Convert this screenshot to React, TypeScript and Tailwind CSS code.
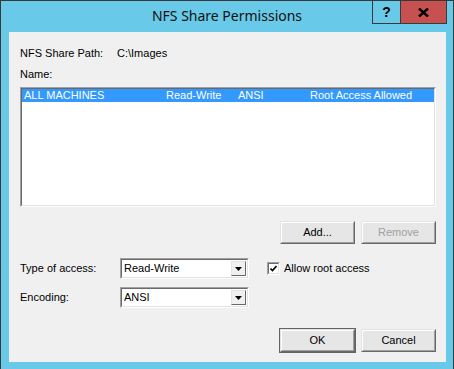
import React from 'react';

const font = { fontFamily: '"Liberation Sans", Arial, sans-serif' };

const WinButton: React.FC<{ label: string; disabled?: boolean; isDefault?: boolean }> = ({ label, disabled, isDefault }) => (
  <div
    className={`w-[75px] h-[23px] flex items-center justify-center text-[11px] bg-[#e6e6e6] border border-t-[#e3e3e3] border-l-[#e3e3e3] border-r-[#696969] border-b-[#696969] ${isDefault ? 'outline outline-1 outline-[#646464]' : ''}`}
  >
    <div className="w-full h-full flex items-center justify-center border border-t-white border-l-white border-r-[#a0a0a0] border-b-[#a0a0a0]">
      <span className={disabled ? 'text-[#a0a0a0]' : 'text-black'}>{label}</span>
    </div>
  </div>
);

const Combo: React.FC<{ value: string }> = ({ value }) => (
  <div className="w-[129px] h-[21px] border border-t-[#a0a0a0] border-l-[#a0a0a0] border-r-white border-b-white">
    <div className="w-full h-full flex items-center bg-white border border-t-[#696969] border-l-[#696969] border-r-[#e3e3e3] border-b-[#e3e3e3]">
      <span className="flex-1 pl-[2px] text-[11px] leading-[13px]">{value}</span>
      <div className="w-[15px] h-[15px] mr-[1px] flex items-center justify-center bg-[#f0f0f0] border border-t-[#e3e3e3] border-l-[#e3e3e3] border-r-[#696969] border-b-[#696969]">
        <svg width="7" height="4" viewBox="0 0 7 4">
          <path d="M0 0h7L3.5 4z" fill="#000" />
        </svg>
      </div>
    </div>
  </div>
);

export default function App() {
  return (
    <div
      className="w-[454px] h-[369px] bg-[#69c9e8] border-t border-l border-r border-[#383838] flex flex-col relative"
      style={font}
    >
      {/* caption */}
      <div className="h-[31px] flex items-center justify-center">
        <span className="text-[14px] text-[#111] pb-[3px]" style={{ fontFamily: '"Noto Sans", "Open Sans", sans-serif' }}>
          NFS Share Permissions
        </span>
      </div>
      <div className="absolute top-0 right-[6px] flex h-[23px] border border-t-0 border-[#3a3a3a]">
        <div className="w-[28px] flex items-center justify-center border-r border-[#3a3a3a] text-[14px] font-bold text-black">?</div>
        <div className="w-[45px] flex items-center justify-center bg-[#c75050]">
          <svg width="11" height="9" viewBox="0 0 11 9">
            <path d="M1 0.5L10 8.5M10 0.5L1 8.5" stroke="#000" strokeWidth="2.4" />
          </svg>
        </div>
      </div>

      {/* client area */}
      <div className="ml-[8px] mr-[7px] mb-[7px] flex-1 bg-[#f0f0f0] pl-[11px] pr-[10px] pt-[15px] flex flex-col text-[11px] text-black">
        <div className="flex h-[13px] leading-[13px]">
          <span className="w-[97px]">NFS Share Path:</span>
          <span>C:\Images</span>
        </div>
        <div className="h-[13px] leading-[13px] mt-[8px]">Name:</div>

        <div className="mt-[6px] h-[120px] border border-t-[#a0a0a0] border-l-[#a0a0a0] border-r-white border-b-white">
          <div className="w-full h-full bg-white border border-t-[#696969] border-l-[#696969] border-r-[#e3e3e3] border-b-[#e3e3e3]">
            <div className="h-[13px] leading-[13px] bg-[#3399ff] text-white grid grid-cols-[142px_72px_72px_1fr] pl-[2px]">
              <span>ALL MACHINES</span>
              <span>Read-Write</span>
              <span>ANSI</span>
              <span>Root Access Allowed</span>
            </div>
          </div>
        </div>

        <div className="mt-[14px] flex justify-end gap-[6px]">
          <WinButton label="Add..." />
          <WinButton label="Remove" disabled />
        </div>

        <div className="mt-[14px] flex items-center">
          <span className="w-[100px]">Type of access:</span>
          <Combo value="Read-Write" />
          <div className="ml-[18px] flex items-center gap-[4px]">
            <div className="w-[13px] h-[13px] border border-t-[#a0a0a0] border-l-[#a0a0a0] border-r-white border-b-white">
              <div className="w-full h-full bg-white border border-t-[#696969] border-l-[#696969] border-r-[#e3e3e3] border-b-[#e3e3e3] flex items-center justify-center">
                <svg width="7" height="7" viewBox="0 0 7 7">
                  <path d="M0.5 3.5L2.5 5.5L6.5 1" stroke="#000" strokeWidth="1.6" fill="none" />
                </svg>
              </div>
            </div>
            <span>Allow root access</span>
          </div>
        </div>

        <div className="mt-[8px] flex items-center">
          <span className="w-[100px]">Encoding:</span>
          <Combo value="ANSI" />
        </div>

        <div className="mt-[21px] flex justify-end gap-[6px]">
          <WinButton label="OK" isDefault />
          <WinButton label="Cancel" />
        </div>
      </div>
    </div>
  );
}
